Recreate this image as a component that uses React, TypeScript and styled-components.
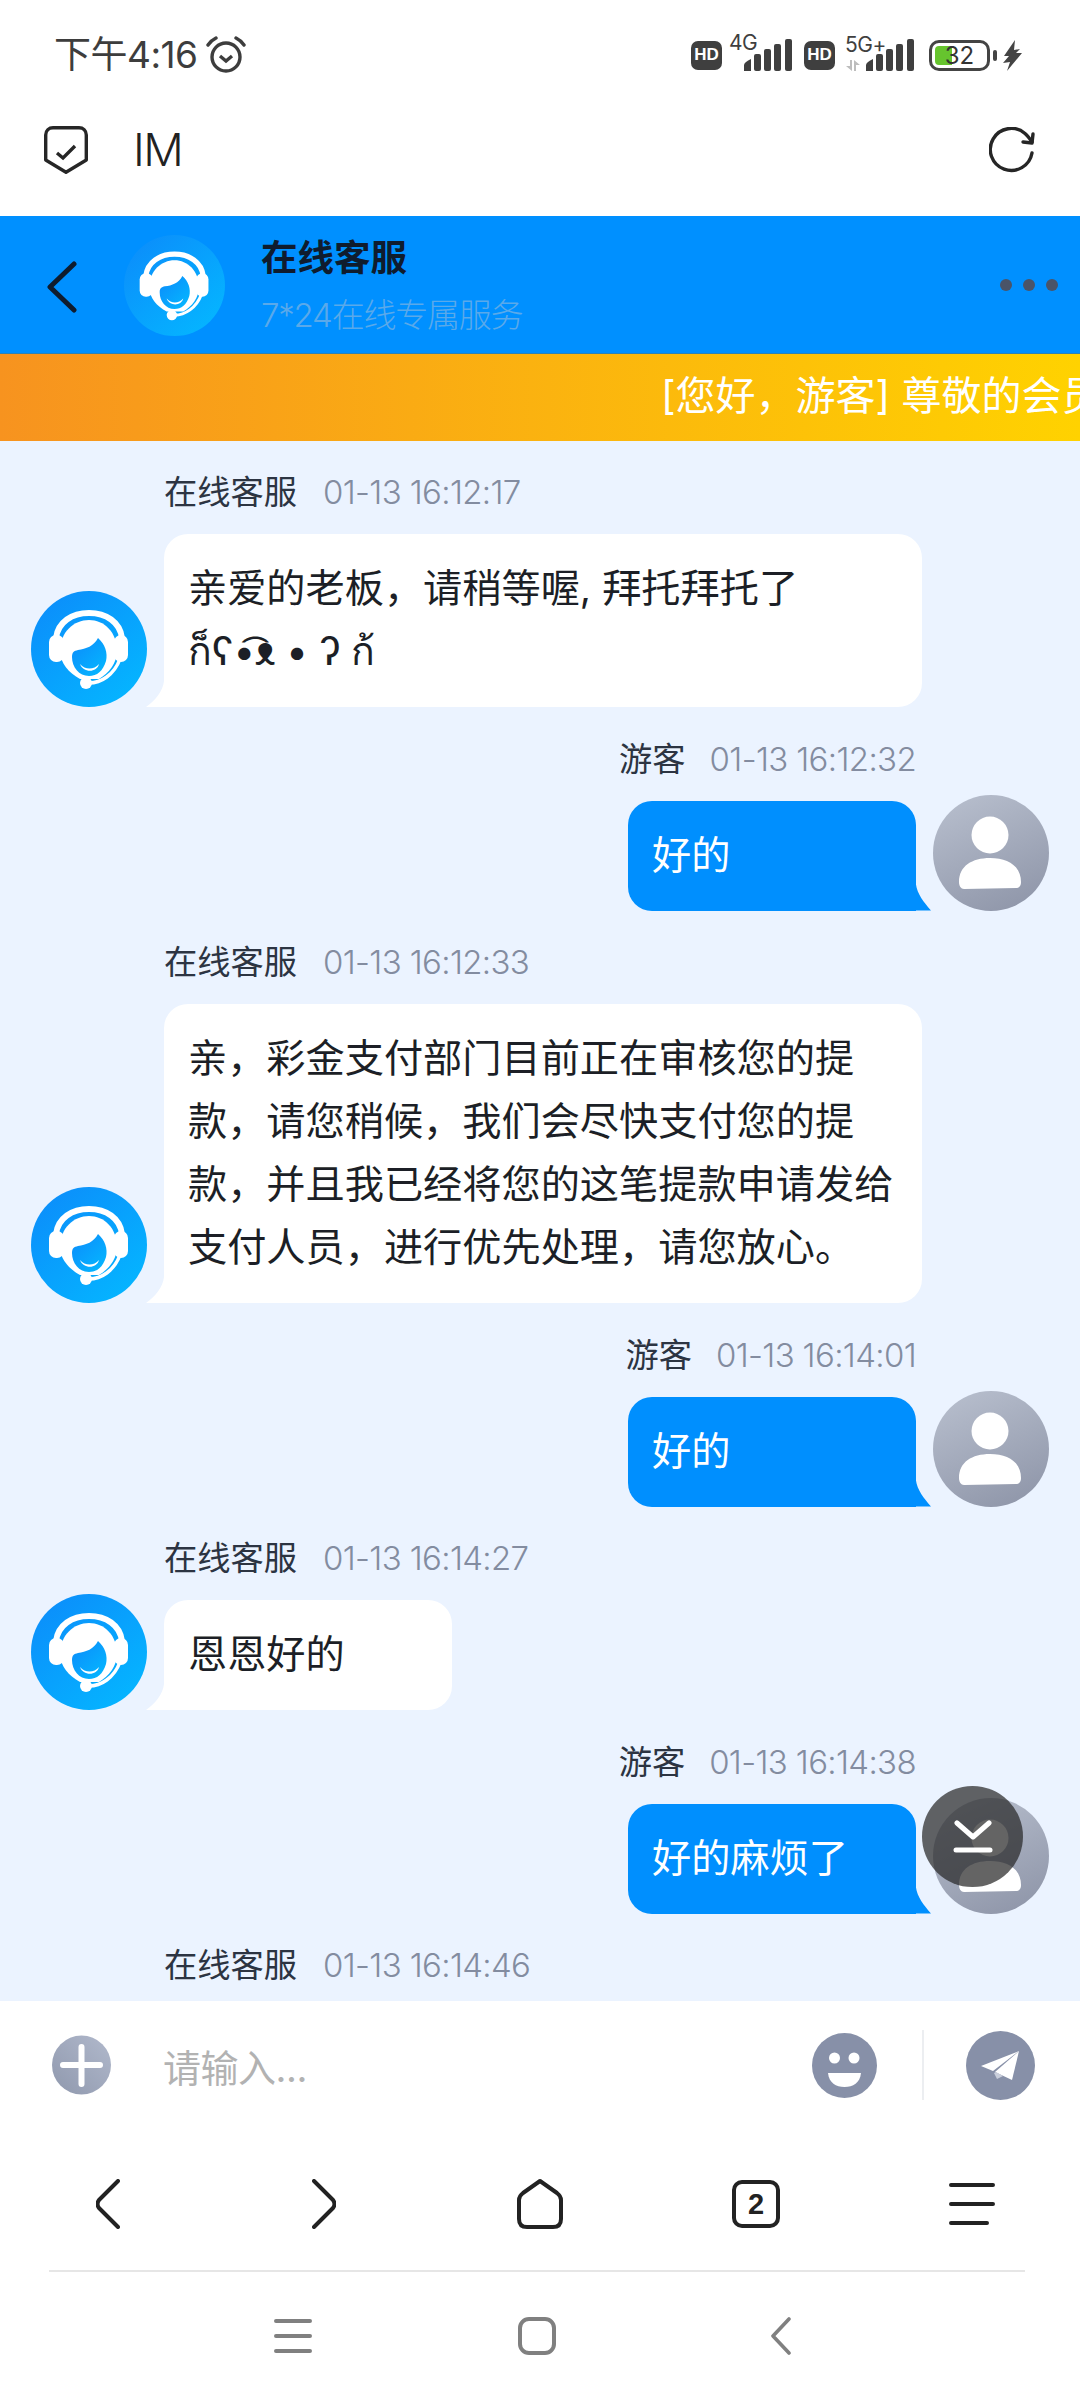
import styled, { createGlobalStyle } from "styled-components";

const GlobalStyle = createGlobalStyle`
    html, body {
        margin: 0;
        padding: 0;
        background: #fff;
    }
    * {
        box-sizing: border-box;
    }
`;

const cjk = `Inter, "Noto Sans CJK SC", "Noto Sans", sans-serif`;

const Page = styled.div`
    width: 1080px;
    height: 2400px;
    display: flex;
    flex-direction: column;
    overflow: hidden;
    background: #fff;
    font-family: ${cjk};
`;

const StatusBar = styled.div`
    height: 88px;
    flex: none;
    display: flex;
    align-items: center;
    justify-content: space-between;
    padding: 22px 58px 0 54px;
    color: #3d3d3d;
`;

const StatusLeft = styled.div`
    display: flex;
    align-items: center;
    gap: 8px;
    font-size: 37px;
    letter-spacing: -0.5px;
    line-height: 40px;
`;

const StatusRight = styled.div`
    display: flex;
    align-items: center;
`;

const HdBadge = styled.span<{ $gap: number }>`
    width: 31px;
    height: 29px;
    margin-right: ${(p) => p.$gap}px;
    border-radius: 7px;
    background: #3f3f3f;
    color: #fff;
    font-family: "Liberation Sans", sans-serif;
    font-size: 17px;
    font-weight: 700;
    display: flex;
    align-items: center;
    justify-content: center;
`;

const NetLabel = styled.span`
    font-size: 21px;
    line-height: 20px;
    letter-spacing: -0.5px;
    color: #3f3f3f;
`;

const NetTop = styled(NetLabel)`
    align-self: flex-start;
    margin-top: -6px;
    width: 25px;
`;

const NetColumn = styled.div`
    width: 38px;
    height: 36px;
    margin-top: -4px;
    display: flex;
    flex-direction: column;
    gap: 5px;
`;

const SignalWrap = styled.span<{ $left: number; $right: number }>`
    display: flex;
    margin-left: ${(p) => p.$left}px;
    margin-right: ${(p) => p.$right}px;
`;

const Battery = styled.div`
    width: 61px;
    height: 31px;
    border: 3px solid #444;
    border-radius: 10px;
    padding: 3px;
    background: linear-gradient(to right, #66c42e 17px, transparent 17px) no-repeat;
    background-origin: content-box;
    background-clip: content-box;
    display: flex;
    align-items: center;
    justify-content: center;
    font-size: 24px;
    color: #333;
`;

const BatteryNub = styled.span`
    width: 4px;
    height: 11px;
    margin: 0 6px 0 3px;
    border-radius: 2px;
    background: #444;
`;

const BrowserBar = styled.div`
    height: 128px;
    flex: none;
    display: flex;
    align-items: center;
    padding: 0 45px 4px 44px;
    color: #222;
`;

const BrowserTitle = styled.div`
    flex: 1;
    margin-left: 45px;
    font-size: 45px;
    line-height: 50px;
    font-weight: 300;
    letter-spacing: -1.5px;
`;

const ChatHeader = styled.div`
    height: 138px;
    flex: none;
    display: flex;
    align-items: center;
    padding: 0 22px 0 47px;
    background: #0090ff;
    box-shadow: inset 0 -1px 0 rgba(120, 110, 60, 0.4);
`;

const BackGlyph = styled.svg`
    flex: none;
    margin-top: 4px;
`;

const HeaderAvatar = styled.div`
    width: 101px;
    height: 101px;
    flex: none;
    margin-left: 47px;
`;

const HeaderText = styled.div`
    flex: 1;
    margin-left: 36px;
    padding-top: 2px;
    display: flex;
    flex-direction: column;
    gap: 11px;
`;

const HeaderTitle = styled.div`
    font-size: 36.500px;
    line-height: 46px;
    font-weight: 700;
    color: #0f1c2e;
`;

const HeaderSub = styled.div`
    font-size: 33px;
    line-height: 46px;
    font-weight: 300;
    letter-spacing: -1.200px;
    color: #5aa9ea;
`;

const Dots = styled.div`
    display: flex;
    gap: 11px;
`;

const Dot = styled.span`
    width: 12px;
    height: 12px;
    border-radius: 50%;
    background: #4a5468;
`;

const Banner = styled.div`
    height: 87px;
    flex: none;
    overflow: hidden;
    display: flex;
    align-items: center;
    padding: 0 0 10px 661px;
    white-space: nowrap;
    font-size: 40px;
    color: #fff;
    background: linear-gradient(to right, #f7931f, #ffd200);
`;

const Chat = styled.div`
    position: relative;
    height: 1560px;
    flex: none;
    overflow: hidden;
    padding: 30px 31px 0;
    background: #ebf3ff;
    display: flex;
    flex-direction: column;
    gap: 30.500px;
`;

const Message = styled.div`
    display: flex;
    flex: none;
    flex-direction: column;
`;

const MetaRow = styled.div<{ $mine?: boolean }>`
    height: 42px;
    margin-bottom: 21px;
    display: flex;
    align-items: center;
    justify-content: ${(p) => (p.$mine ? "flex-end" : "flex-start")};
    gap: ${(p) => (p.$mine ? 24 : 26)}px;
    padding: ${(p) => (p.$mine ? "0 133px 0 0" : "0 0 0 133px")};
`;

const Sender = styled.span`
    font-size: 33.250px;
    line-height: 42px;
    font-weight: 400;
    color: #2c3442;
`;

const Stamp = styled.span`
    font-size: 33px;
    line-height: 42px;
    font-weight: 300;
    letter-spacing: -0.650px;
    color: #838ca0;
`;

const BubbleRow = styled.div<{ $mine?: boolean }>`
    display: flex;
    align-items: flex-end;
    gap: 17px;
    justify-content: ${(p) => (p.$mine ? "flex-end" : "flex-start")};
`;

const Bubble = styled.div<{ $mine?: boolean }>`
    position: relative;
    min-width: 288px;
    max-width: 758px;
    padding: 22px 24px 25px;
    border-radius: 24px;
    font-size: 39.200px;
    line-height: 63px;
    color: ${(p) => (p.$mine ? "#fff" : "#1c1f26")};
    background: ${(p) => (p.$mine ? "#008ffe" : "#fff")};
    ${(p) => (p.$mine ? "border-bottom-right-radius: 0;" : "border-bottom-left-radius: 0;")}

    &::after {
        content: "";
        position: absolute;
        bottom: 0;
        height: 26px;
        background: ${(p) => (p.$mine ? "#008ffe" : "#fff")};
        ${(p) =>
            p.$mine
                ? `width: 15px; right: -15px; clip-path: path('M0 0 C1 9 8 18 15 26 L0 26 Z');`
                : `width: 18px; left: -18px; clip-path: path('M18 0 C17 10 9 20 0 26 L18 26 Z');`}
    }
`;

const Kaomoji = styled.span`
    display: inline-block;
    white-space: nowrap;
`;

// the avatar is a little taller than a one-line bubble and hangs above it
const Avatar = styled.div`
    width: 116px;
    height: 116px;
    flex: none;
    margin-top: -6px;
`;

const ScrollFab = styled.div`
    position: absolute;
    left: 922px;
    top: 1345px;
    width: 101px;
    height: 101px;
    border-radius: 50%;
    background: rgba(40, 40, 40, 0.72);
    display: flex;
    align-items: center;
    justify-content: center;
`;

const Composer = styled.div`
    height: 128px;
    flex: none;
    display: flex;
    align-items: center;
    padding: 0 45px 0 52px;
    background: #fff;
`;

const Placeholder = styled.div`
    flex: 1;
    margin-left: 52px;
    font-size: 38px;
    letter-spacing: -0.500px;
    color: #b2b2b2;
`;

const ComposerDivider = styled.span`
    width: 2px;
    height: 70px;
    margin: 0 42px 0 45px;
    background: #eceef1;
`;

const BrowserNav = styled.div`
    height: 141px;
    flex: none;
    padding-top: 9px;
    display: grid;
    grid-template-columns: repeat(5, 216px);
    align-items: center;
    justify-items: center;
`;

const SystemNav = styled.div`
    height: 130px;
    flex: none;
    margin: 0 55px 0 49px;
    border-top: 2px solid #e6e6e6;
    display: grid;
    grid-template-columns: repeat(3, 244px);
    justify-content: center;
    align-items: center;
    justify-items: center;
`;

const TabsIcon = styled.div`
    width: 48px;
    height: 48px;
    border: 4px solid #222;
    border-radius: 10px;
    display: flex;
    align-items: center;
    justify-content: center;
    font-family: "Liberation Sans", sans-serif;
    font-size: 29px;
    font-weight: 700;
    color: #222;
`;

const AgentFace = ({ id, size }: { id: string; size: number }) => (
    <svg width={size} height={size} viewBox="0 0 116 116">
        <defs>
            <linearGradient id={id} x1="0.15" y1="0.1" x2="0.85" y2="0.9">
                <stop offset="0" stopColor="#0b90fb" />
                <stop offset="1" stopColor="#05b4ff" />
            </linearGradient>
        </defs>
        <circle cx="58" cy="58" r="58" fill={`url(#${id})`} />
        <path d="M25 47C27 31 41 22 58 22C75 22 89 31 91 47" fill="none" stroke="#fff" strokeWidth="6" />
        <rect x="18" y="44" width="15" height="27" rx="7" fill="#fff" />
        <rect x="83" y="44" width="14" height="27" rx="7" fill="#fff" />
        <path d="M29 60C29 41 43 29 58 29C73 29 86 41 86 60C86 72 78 82 68 88L49 88C38 82 29 72 29 60Z" fill="#fff" />
        <path d="M41 66C41 61 43 60 47 59C55 58 63 55 67 47C74 53 77 62 75 70C72 80 66 85 58 85C48 85 41 76 41 66Z" fill={`url(#${id})`} />
        <path d="M49 73C54 79 63 79 68 73C66 82 52 82 49 73Z" fill="#fff" />
        <path d="M58 92C70 92 83 84 89 68" fill="none" stroke="#fff" strokeWidth="3.500" />
        <circle cx="55" cy="92" r="6" fill="#fff" />
    </svg>
);

const GuestFace = () => (
    <svg width="116" height="116" viewBox="0 0 116 116">
        <defs>
            <linearGradient id="guestBg" x1="0.25" y1="0" x2="0.7" y2="1">
                <stop offset="0" stopColor="#b6bdcc" />
                <stop offset="1" stopColor="#9097aa" />
            </linearGradient>
        </defs>
        <circle cx="58" cy="58" r="58" fill="url(#guestBg)" />
        <circle cx="57" cy="40" r="18.5" fill="#fff" />
        <path d="M26 87C26 71 39 63 57 63C75 63 88 71 88 87C88 91 86 93 83 93L31 94C28 94 26 91 26 87Z" fill="#fff" />
    </svg>
);

const AlarmIcon = () => (
    <svg width="40" height="38" viewBox="0 0 40 38" fill="none" stroke="#3d3d3d">
        <circle cx="20" cy="21" r="14" strokeWidth="3.4" />
        <path d="M14 20l6 5 6-5" strokeWidth="3.4" />
        <path d="M2 9C4 6 6 4 10 2M38 9C36 6 34 4 30 2" strokeWidth="3.4" strokeLinecap="round" />
    </svg>
);

const SignalIcon = () => (
    <svg width="48" height="32" viewBox="0 0 48 32" fill="#3f3f3f">
        <path d="M0 32v-6c0-2 3-4 7-6v12z" />
        <rect x="10" y="15" width="7" height="17" rx="2" />
        <rect x="20" y="10" width="7" height="22" rx="2" />
        <rect x="30" y="5" width="7" height="27" rx="2" />
        <rect x="41" y="0" width="7" height="32" rx="2" />
    </svg>
);

const DataArrows = () => (
    <svg width="16" height="11" viewBox="0 0 16 11" fill="#bdbdbd">
        <path d="M5 0h2v11L1 6h4zM9 0l6 5h-4v6H9z" />
    </svg>
);

const BoltIcon = () => (
    <svg width="19" height="31" viewBox="0 0 19 31" fill="#444">
        <path d="M12 0L1 16h5L0 23l7-1-3 9L19 13h-6l4-4-6 1z" />
    </svg>
);

const ShieldIcon = () => (
    <svg width="44" height="48" viewBox="0 0 44 48" fill="none" stroke="#262626" strokeWidth="3.4">
        <path d="M9 1.700H35C39 1.700 42.300 4.500 42.300 9V34L22 46.300L1.700 34V9C1.700 4.500 5 1.700 9 1.700Z" strokeLinejoin="round" />
        <path d="M13 27l6 5 12-12" strokeWidth="3.4" />
    </svg>
);

const RefreshIcon = () => (
    <svg width="46" height="46" viewBox="0 0 46 46" fill="none" stroke="#262626" strokeWidth="3.4" strokeLinecap="round">
        <path d="M43 26A21 21 0 1 1 36 6.500C39 9 41 12 43 15" />
        <path d="M44 7L43 16L34 15" strokeLinejoin="round" />
    </svg>
);

const BackIcon = () => (
    <BackGlyph width="30" height="52" viewBox="0 0 30 52" fill="none" stroke="#0f1c2e" strokeWidth="5" strokeLinecap="round" strokeLinejoin="round">
        <path d="M27 3L3 26L27 49" />
    </BackGlyph>
);

const ScrollDownIcon = () => (
    <svg width="40" height="34" viewBox="0 0 40 34" fill="none" stroke="#fff" strokeWidth="5" strokeLinecap="round" strokeLinejoin="round">
        <path d="M4 3L20 17L36 3" />
        <path d="M3 30H37" />
    </svg>
);

const PlusIcon = () => (
    <svg width="59" height="60" viewBox="0 0 59 60">
        <defs>
            <linearGradient id="plusBg" x1="0" y1="1" x2="1" y2="0">
                <stop offset="0" stopColor="#8f98ad" />
                <stop offset="1" stopColor="#b1b9cc" />
            </linearGradient>
        </defs>
        <circle cx="29.500" cy="30" r="29.500" fill="url(#plusBg)" />
        <path d="M11 30H48M29.500 12V49" stroke="#fff" strokeWidth="6" strokeLinecap="round" />
    </svg>
);

const EmojiIcon = () => (
    <svg width="65" height="65" viewBox="0 0 65 65">
        <circle cx="32.500" cy="32.500" r="32.500" fill="#8790a8" />
        <circle cx="22.500" cy="25" r="5.500" fill="#fff" />
        <circle cx="42" cy="25" r="5.500" fill="#fff" />
        <path d="M16 40H49C48 50 41 54 32.500 54C24 54 17 50 16 40Z" fill="#fff" />
    </svg>
);

const SendIcon = () => (
    <svg width="69" height="69" viewBox="0 0 69 69">
        <circle cx="34.500" cy="34.500" r="34.500" fill="#8790a8" />
        <path d="M53 20L15 35L27 40L53 20Z" fill="#fff" />
        <path d="M53 20L29 41L46 49L53 20Z" fill="#fff" />
        <path d="M28 42L31 48L37 45L30 41L28 42Z" fill="#c9cedb" />
    </svg>
);

const NavChevron = ({ flip }: { flip?: boolean }) => (
    <svg width="24" height="50" viewBox="0 0 24 50" fill="none" stroke="#222" strokeWidth="4" strokeLinecap="round" strokeLinejoin="round">
        <path d={flip ? "M2 2L21 21Q24 25 21 29L2 48" : "M22 2L3 21Q0 25 3 29L22 48"} />
    </svg>
);

const HomeIcon = () => (
    <svg width="46" height="50" viewBox="0 0 46 50" fill="none" stroke="#222" strokeWidth="4" strokeLinejoin="round">
        <path d="M23 2L40 14Q44 17 44 21V40Q44 48 36 48H10Q2 48 2 40V21Q2 17 6 14Z" />
    </svg>
);

const MenuIcon = () => (
    <svg width="46" height="44" viewBox="0 0 46 44" fill="none" stroke="#222" strokeWidth="4" strokeLinecap="round">
        <path d="M2 3H44M2 22H44M2 41H38" />
    </svg>
);

const SysMenuIcon = () => (
    <svg width="38" height="36" viewBox="0 0 38 36" fill="none" stroke="#808080" strokeWidth="4" strokeLinecap="round">
        <path d="M2 3H36M2 18H36M2 33H36" />
    </svg>
);

const SysSquareIcon = () => (
    <svg width="38" height="38" viewBox="0 0 38 38" fill="none" stroke="#808080" strokeWidth="4">
        <rect x="2" y="2" width="34" height="34" rx="9" />
    </svg>
);

const SysBackIcon = () => (
    <svg width="20" height="38" viewBox="0 0 20 38" fill="none" stroke="#808080" strokeWidth="3.6" strokeLinecap="round" strokeLinejoin="round">
        <path d="M18 2L2 19L18 36" />
    </svg>
);

const messages = [
    { mine: false, name: "在线客服", time: "01-13 16:12:17", text: "亲爱的老板，请稍等喔, 拜托拜托了 ", kaomoji: "ก็ʕ•͡ᴥ • ʔ ก้" },
    { mine: true, name: "游客", time: "01-13 16:12:32", text: "好的" },
    {
        mine: false,
        name: "在线客服",
        time: "01-13 16:12:33",
        text: "亲，彩金支付部门目前正在审核您的提款，请您稍候，我们会尽快支付您的提款，并且我已经将您的这笔提款申请发给支付人员，进行优先处理，请您放心。",
    },
    { mine: true, name: "游客", time: "01-13 16:14:01", text: "好的" },
    { mine: false, name: "在线客服", time: "01-13 16:14:27", text: "恩恩好的" },
    { mine: true, name: "游客", time: "01-13 16:14:38", text: "好的麻烦了" },
];

const App = () => {
    return (
        <Page>
            <GlobalStyle />
            <StatusBar>
                <StatusLeft>
                    下午4:16
                    <AlarmIcon />
                </StatusLeft>
                <StatusRight>
                    <HdBadge $gap={7}>HD</HdBadge>
                    <NetTop>4G</NetTop>
                    <SignalWrap $left={-10} $right={12}>
                        <SignalIcon />
                    </SignalWrap>
                    <HdBadge $gap={10}>HD</HdBadge>
                    <NetColumn>
                        <NetLabel>5G+</NetLabel>
                        <DataArrows />
                    </NetColumn>
                    <SignalWrap $left={-17} $right={15}>
                        <SignalIcon />
                    </SignalWrap>
                    <Battery>32</Battery>
                    <BatteryNub />
                    <BoltIcon />
                </StatusRight>
            </StatusBar>
            <BrowserBar>
                <ShieldIcon />
                <BrowserTitle>IM</BrowserTitle>
                <RefreshIcon />
            </BrowserBar>
            <ChatHeader>
                <BackIcon />
                <HeaderAvatar>
                    <AgentFace id="headerAgent" size={101} />
                </HeaderAvatar>
                <HeaderText>
                    <HeaderTitle>在线客服</HeaderTitle>
                    <HeaderSub>7*24在线专属服务</HeaderSub>
                </HeaderText>
                <Dots>
                    <Dot />
                    <Dot />
                    <Dot />
                </Dots>
            </ChatHeader>
            <Banner>[您好，游客] 尊敬的会员，欢迎您的光临</Banner>
            <Chat>
                {messages.map((m, i) => (
                    <Message key={i}>
                        <MetaRow $mine={m.mine}>
                            <Sender>{m.name}</Sender>
                            <Stamp>{m.time}</Stamp>
                        </MetaRow>
                        <BubbleRow $mine={m.mine}>
                            {!m.mine && (
                                <Avatar>
                                    <AgentFace id={`agent${i}`} size={116} />
                                </Avatar>
                            )}
                            <Bubble $mine={m.mine}>
                                {m.text}
                                {m.kaomoji && <Kaomoji>{m.kaomoji}</Kaomoji>}
                            </Bubble>
                            {m.mine && (
                                <Avatar>
                                    <GuestFace />
                                </Avatar>
                            )}
                        </BubbleRow>
                    </Message>
                ))}
                <Message>
                    <MetaRow>
                        <Sender>在线客服</Sender>
                        <Stamp>01-13 16:14:46</Stamp>
                    </MetaRow>
                </Message>
                <ScrollFab>
                    <ScrollDownIcon />
                </ScrollFab>
            </Chat>
            <Composer>
                <PlusIcon />
                <Placeholder>请输入...</Placeholder>
                <EmojiIcon />
                <ComposerDivider />
                <SendIcon />
            </Composer>
            <BrowserNav>
                <NavChevron />
                <NavChevron flip />
                <HomeIcon />
                <TabsIcon>2</TabsIcon>
                <MenuIcon />
            </BrowserNav>
            <SystemNav>
                <SysMenuIcon />
                <SysSquareIcon />
                <SysBackIcon />
            </SystemNav>
        </Page>
    );
};

export default App;
